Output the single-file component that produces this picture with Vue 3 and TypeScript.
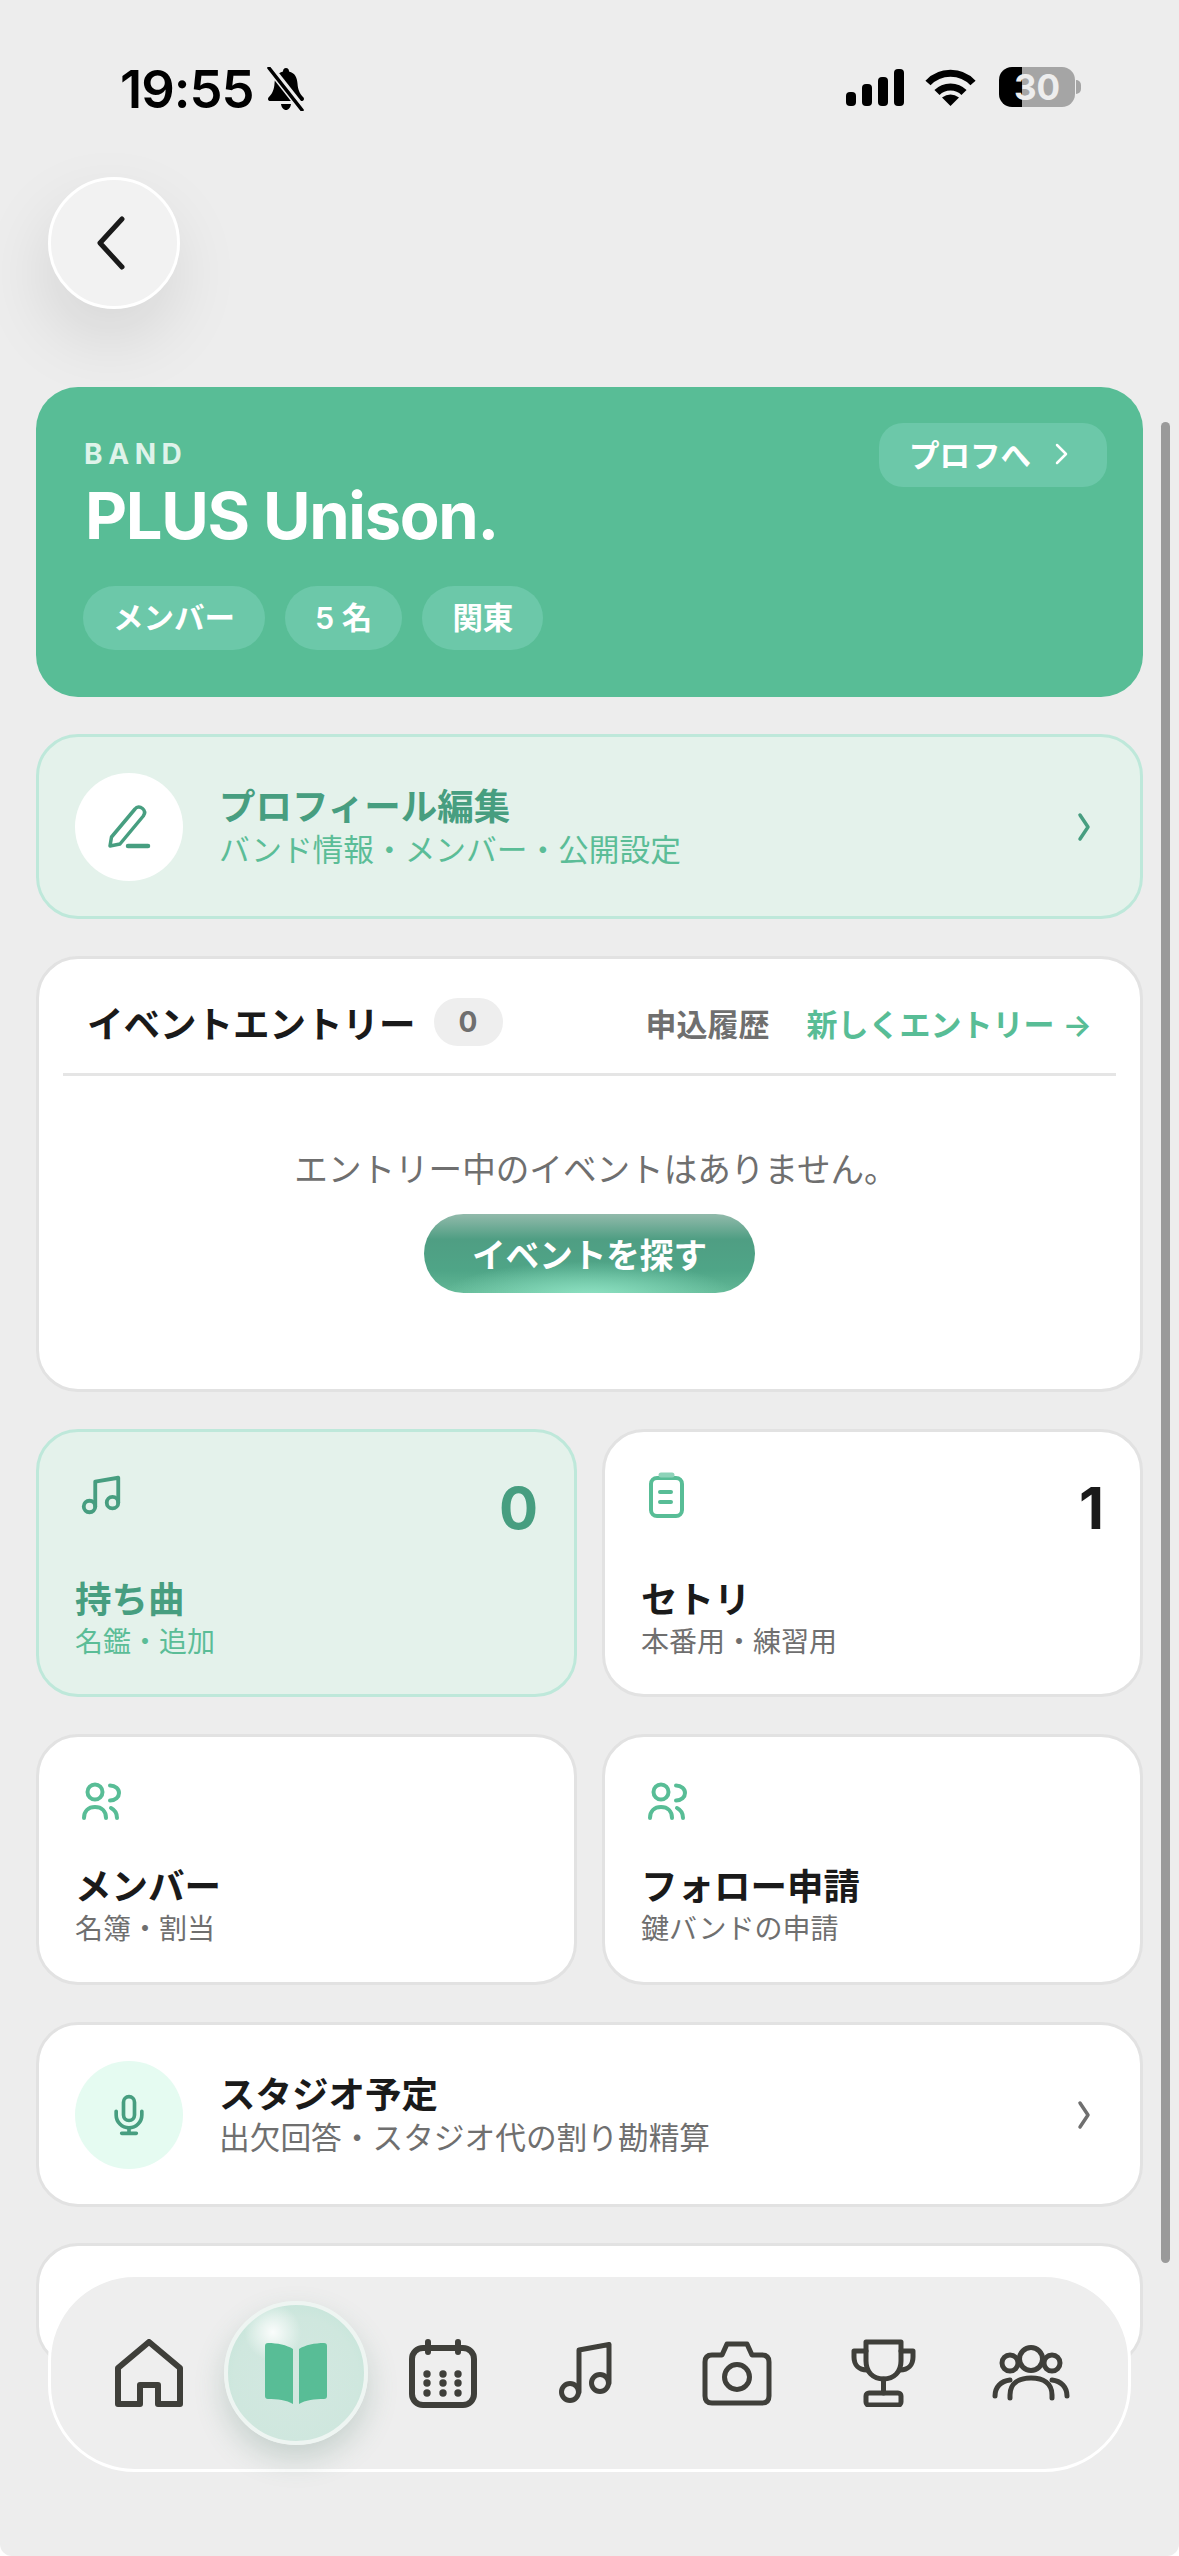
<script setup lang="ts">
interface Tile {
  title: string
  sub: string
  icon: 'music' | 'list' | 'users'
  count?: number
  active?: boolean
}

const chips = ['メンバー', '5 名', '関東']

const tiles: Tile[] = [
  { title: '持ち曲', sub: '名鑑・追加', icon: 'music', count: 0, active: true },
  { title: 'セトリ', sub: '本番用・練習用', icon: 'list', count: 1 },
  { title: 'メンバー', sub: '名簿・割当', icon: 'users' },
  { title: 'フォロー申請', sub: '鍵バンドの申請', icon: 'users' }
]

const calendarDots = [18, 34, 49].flatMap((cx) => [35, 44, 54].map((cy) => ({ cx, cy })))
</script>

<template>
  <div class="page">
    <header class="status">
      <div class="status-left">
        <span class="time">19:55</span>
        <svg class="bell" width="40" height="44" viewBox="0 0 40 44">
          <path d="M20 1c2 0 3 1.500 3 3.500 6 1.500 8 6 8.500 12 .4 6 2 10 6 14 1 1.500 .5 3.500-2 3.500H4.500c-2.500 0-3-2-2-3.500 4-4 5.600-8 6-14 .5-6 2.500-10.500 8.500-12C17 2.500 18 1 20 1z" fill="#000" />
          <path d="M15 37h10c-.5 3.500-2.500 6-5 6s-4.500-2.500-5-6z" fill="#000" />
          <path d="M4 1l33 42" stroke="#ededed" stroke-width="8" />
          <path d="M3 1l33 42" stroke="#000" stroke-width="3.500" stroke-linecap="round" />
        </svg>
      </div>
      <div class="status-right">
        <svg width="59" height="37" viewBox="0 0 59 37" fill="#000">
          <rect x="0" y="23" width="10" height="14" rx="4" />
          <rect x="16" y="15" width="10" height="22" rx="4" />
          <rect x="32" y="8" width="10" height="29" rx="4" />
          <rect x="48" y="0" width="10" height="37" rx="4" />
        </svg>
        <svg class="wifi" width="51" height="37" viewBox="0 0 51 37" fill="none" stroke="#000" stroke-width="7">
          <path d="M3 14C15 1 36 1 48 14" />
          <path d="M12 23.500C19 16 32 16 39 23.500" />
          <path d="M25.500 37L17 28.500Q25.500 22.500 34 28.500Z" fill="#000" stroke="none" />
        </svg>
        <div class="battery">
          <div class="battery-body">30</div>
          <span class="battery-nub"></span>
        </div>
      </div>
    </header>

    <button class="back" type="button" aria-label="戻る">
      <svg width="30" height="54" viewBox="0 0 30 54" fill="none" stroke="#1a1a1a" stroke-width="5" stroke-linecap="round" stroke-linejoin="round">
        <path d="M26 3L4 27l22 24" />
      </svg>
    </button>

    <main class="content">
      <section class="hero">
        <div class="hero-main">
          <div class="hero-label">BAND</div>
          <h1 class="hero-name">PLUS Unison.</h1>
          <div class="chips">
            <span v-for="chip in chips" :key="chip" class="chip">{{ chip }}</span>
          </div>
        </div>
        <a class="profile-link">
          プロフへ
          <svg width="13" height="22" viewBox="0 0 13 22" fill="none" stroke="#fff" stroke-width="2.500" stroke-linecap="round" stroke-linejoin="round">
            <path d="M2 2l9 9-9 9" />
          </svg>
        </a>
      </section>

      <section class="row-card row-card--accent">
        <span class="row-icon row-icon--white">
          <svg width="46" height="46" viewBox="0 0 46 46" fill="none" stroke="#479e80" stroke-width="3.500" stroke-linecap="round" stroke-linejoin="round">
            <path d="M4 42l1.500-9L29 5c2-2.500 5-2.500 7.500-.5s2.500 5 .8 7.500L14 40z" />
            <path d="M22 42h20" stroke-width="4.500" />
          </svg>
        </span>
        <div class="row-text">
          <div class="row-title">プロフィール編集</div>
          <div class="row-sub">バンド情報・メンバー・公開設定</div>
        </div>
        <svg class="row-chevron" width="14" height="30" viewBox="0 0 14 30" fill="none" stroke="#479e80" stroke-width="3.500" stroke-linecap="round" stroke-linejoin="round">
          <path d="M3 3l8 12-8 12" />
        </svg>
      </section>

      <section class="entry-card">
        <div class="entry-head">
          <span class="entry-title">イベントエントリー</span>
          <span class="entry-badge">0</span>
          <span class="entry-history">申込履歴</span>
          <span class="entry-new">新しくエントリー →</span>
        </div>
        <div class="entry-body">
          <p class="entry-empty">エントリー中のイベントはありません。</p>
          <button class="entry-btn" type="button">イベントを探す</button>
        </div>
      </section>

      <section class="tiles">
        <article v-for="tile in tiles" :key="tile.title" class="tile" :class="{ 'tile--active': tile.active, 'tile--plain': tile.count === undefined }">
          <div class="tile-head">
            <svg v-if="tile.icon === 'music'" width="46" height="46" viewBox="0 0 24 24" fill="none" stroke="#479e80" stroke-width="2" stroke-linecap="round" stroke-linejoin="round">
              <path d="M9 18V5l12-2v13" />
              <circle cx="6" cy="18" r="3" />
              <circle cx="18" cy="16" r="3" />
            </svg>
            <svg v-else-if="tile.icon === 'list'" class="tile-icon-list" width="46" height="50" viewBox="0 0 46 50" fill="none" stroke="#58bd96" stroke-width="4" stroke-linecap="round" stroke-linejoin="round">
              <rect x="7" y="9" width="31" height="38" rx="6" />
              <path d="M17 6h11" stroke="#8ed3b9" stroke-width="5" />
              <path d="M16 23h11M16 33h11" />
            </svg>
            <svg v-else width="46" height="46" viewBox="0 0 46 46" fill="none" stroke="#58bd96" stroke-width="4" stroke-linecap="round" stroke-linejoin="round">
              <circle cx="17" cy="12" r="7.500" />
              <path d="M6 38c0-7 4.500-11 11-11s11 4 11 11" />
              <path d="M32 5.500c5.500 0 9 3.500 9 7.500s-3.500 7.500-9 7.500" />
              <path d="M33 28c4 2 6 5.500 6 10" />
            </svg>
            <span v-if="tile.count !== undefined" class="tile-count">{{ tile.count }}</span>
          </div>
          <div class="tile-title">{{ tile.title }}</div>
          <div class="tile-sub">{{ tile.sub }}</div>
        </article>
      </section>

      <section class="row-card">
        <span class="row-icon row-icon--mint">
          <svg width="44" height="44" viewBox="0 0 24 24" fill="none" stroke="#479e80" stroke-width="2" stroke-linecap="round" stroke-linejoin="round">
            <rect x="9" y="2" width="6" height="13" rx="3" />
            <path d="M19 10v2a7 7 0 0 1-14 0v-2" />
            <path d="M12 19v3M8 22h8" />
          </svg>
        </span>
        <div class="row-text">
          <div class="row-title row-title--dark">スタジオ予定</div>
          <div class="row-sub row-sub--grey">出欠回答・スタジオ代の割り勘精算</div>
        </div>
        <svg class="row-chevron" width="14" height="30" viewBox="0 0 14 30" fill="none" stroke="#6f6f6f" stroke-width="3.500" stroke-linecap="round" stroke-linejoin="round">
          <path d="M3 3l8 12-8 12" />
        </svg>
      </section>

      <section class="peek-card"></section>
    </main>

    <div class="scrollbar"></div>

    <nav class="tabbar">
      <span class="tab">
        <svg width="68" height="68" viewBox="0 0 68 68" fill="none" stroke="#3f3f3a" stroke-width="6" stroke-linejoin="round">
          <path d="M3 29L34 3l31 26v36H43V46H25v19H3z" />
        </svg>
      </span>
      <span class="tab">
        <span class="tab-bubble">
          <svg width="62" height="61" viewBox="0 0 62 61" fill="#58bd96">
            <path d="M3 0C12 0 22 2 28 6v55c-6-4-16-5-25-5-2 0-3-1-3-3V3c0-2 1-3 3-3z" />
            <path d="M34 6c6-4 16-6 25-6 2 0 3 1 3 3v50c0 2-1 3-3 3-9 0-19 1-25 5z" />
          </svg>
        </span>
      </span>
      <span class="tab">
        <svg width="68" height="69" viewBox="0 0 68 69" fill="none" stroke="#3f3f3a" stroke-width="6" stroke-linecap="round">
          <rect x="3" y="9" width="62" height="57" rx="11" />
          <path d="M19 3v10M49 3v10" />
          <circle v-for="dot in calendarDots" :key="`${dot.cx}-${dot.cy}`" :cx="dot.cx" :cy="dot.cy" r="3.700" fill="#3f3f3a" stroke="none" />
        </svg>
      </span>
      <span class="tab">
        <svg class="tab-music" width="54" height="62" viewBox="0 0 54 62" fill="none" stroke="#3f3f3a" stroke-width="5" stroke-linecap="round" stroke-linejoin="round">
          <path d="M20 50V8l30-5.500V41" />
          <circle cx="11" cy="50" r="8.500" />
          <circle cx="41" cy="41" r="8.500" />
        </svg>
      </span>
      <span class="tab">
        <svg width="70" height="65" viewBox="0 0 70 65" fill="none" stroke="#3f3f3a" stroke-width="5" stroke-linejoin="round">
          <path d="M10 14h10l5-11h20l5 11h10q7 0 7 7v34q0 7-7 7H10q-7 0-7-7V21q0-7 7-7z" />
          <circle cx="35" cy="36" r="12.500" />
        </svg>
      </span>
      <span class="tab">
        <svg width="65" height="68" viewBox="0 0 65 68" fill="none" stroke="#3f3f3a" stroke-width="5" stroke-linecap="round" stroke-linejoin="round">
          <path d="M15 3h35v19c0 11-7 18-17.500 18S15 33 15 22z" />
          <path d="M15 12H3v6c0 8 5 13 13 13" />
          <path d="M50 12h12v6c0 8-5 13-13 13" />
          <path d="M32.500 40v14" />
          <rect x="15" y="54" width="35" height="12" rx="3" />
        </svg>
      </span>
      <span class="tab">
        <svg width="78" height="56" viewBox="0 0 78 56" fill="none" stroke="#3f3f3a" stroke-width="5" stroke-linecap="round" stroke-linejoin="round">
          <circle cx="39" cy="14" r="11.500" />
          <circle cx="18" cy="18" r="8" />
          <circle cx="60" cy="18" r="8" />
          <path d="M18 53v-3c0-12 9-17 21-17s21 5 21 17v3" />
          <path d="M3 51c0-9 6-15 15-16" />
          <path d="M75 51c0-9-6-15-15-16" />
        </svg>
      </span>
    </nav>
  </div>
</template>

<style>
html,
body {
  background: #fff;
}
</style>

<style scoped>
.page {
  position: relative;
  width: 1179px;
  height: 2556px;
  overflow: hidden;
  background: #ededed;
  border-radius: 0 0 12px 12px;
  font-family: Inter, "Noto Sans CJK JP", sans-serif;
  color: #1a1a1a;
}

/* status bar */
.status {
  display: flex;
  justify-content: space-between;
  align-items: flex-start;
  height: 177px;
  box-sizing: border-box;
  padding: 67px 98px 0 120px;
}

.status-left {
  display: flex;
  align-items: center;
  gap: 12px;
}

.time {
  font-size: 52.5px;
  line-height: 40px;
  font-weight: 600;
  letter-spacing: -1px;
  color: #000;
}

.status-right {
  display: flex;
  align-items: flex-start;
  gap: 21px;
  padding-top: 2px;
}

.wifi {
  margin: 0 2px 0 -1px;
}

.battery {
  display: flex;
  align-items: center;
  gap: 1px;
  margin-top: -2px;
}

.battery-body {
  width: 76px;
  height: 40px;
  border-radius: 13px;
  background: linear-gradient(90deg, #000 23px, #a5a5a5 23px);
  color: #ededed;
  font-size: 35px;
  font-weight: 700;
  line-height: 40px;
  text-align: center;
}

.battery-nub {
  width: 5px;
  height: 14px;
  border-radius: 0 7px 7px 0;
  background: #a5a5a5;
}

.back {
  display: flex;
  align-items: center;
  justify-content: center;
  width: 132px;
  height: 132px;
  margin: 0 0 78px 48px;
  padding: 0 6px 0 0;
  box-sizing: border-box;
  border: 3px solid #fff;
  border-radius: 50%;
  background: #f2f2f2;
  box-shadow: -4px 30px 70px rgba(0, 0, 0, 0.1);
}

.content {
  display: flex;
  flex-direction: column;
  gap: 37px;
  padding: 0 36px;
}

/* hero */
.hero {
  display: flex;
  justify-content: space-between;
  align-items: flex-start;
  height: 310px;
  box-sizing: border-box;
  padding: 36px 36px 0 48px;
  border-radius: 42px;
  background: #58bd96;
  color: #fff;
}

.hero-label {
  margin-top: 15px;
  font-size: 28px;
  line-height: 32px;
  font-weight: 700;
  letter-spacing: 0.2em;
  color: #dff3ea;
}

.hero-name {
  margin: 7px 0 0 1px;
  font-size: 65px;
  line-height: 78px;
  font-weight: 700;
  letter-spacing: -0.02em;
}

.chips {
  display: flex;
  gap: 20px;
  margin: 31px 0 0 -1px;
}

.chip {
  height: 64px;
  padding: 0 30px;
  border-radius: 32px;
  background: #6cc8a9;
  font-size: 30.5px;
  line-height: 64px;
  font-weight: 600;
}

.profile-link {
  display: flex;
  align-items: center;
  gap: 24px;
  height: 64px;
  padding: 0 39px 2px 30px;
  box-sizing: border-box;
  border-radius: 24px;
  background: #6cc8a9;
  font-size: 30.5px;
  font-weight: 600;
}

/* rows */
.row-card {
  display: flex;
  align-items: center;
  height: 185px;
  box-sizing: border-box;
  padding: 0 49px 0 36px;
  border: 3px solid #e2e2e2;
  border-radius: 42px;
  background: #fff;
}

.row-card--accent {
  border-color: #bee8da;
  background: #e4f2eb;
}

.row-icon {
  display: flex;
  align-items: center;
  justify-content: center;
  flex: none;
  width: 108px;
  height: 108px;
  border-radius: 50%;
}

.row-icon--white {
  background: #fff;
}

.row-icon--mint {
  background: #e5fbf1;
}

.row-text {
  flex: 1;
  margin-left: 36px;
  padding-top: 3px;
}

.row-title {
  font-size: 36.5px;
  line-height: 42px;
  font-weight: 700;
  color: #479e80;
}

.row-title--dark {
  color: #1a1a1a;
}

.row-sub {
  margin-top: 2px;
  font-size: 30.7px;
  line-height: 40px;
  color: #5bbd97;
}

.row-sub--grey {
  color: #6f6f6f;
}

.row-chevron {
  flex: none;
}

/* entry */
.entry-card {
  height: 436px;
  box-sizing: border-box;
  padding: 0 24px;
  border: 3px solid #e2e2e2;
  border-radius: 42px;
  background: #fff;
}

.entry-head {
  display: flex;
  align-items: center;
  height: 117px;
  box-sizing: border-box;
  padding: 12px 24px 0 24px;
  border-bottom: 3px solid #e5e5e5;
}

.entry-title {
  font-size: 36.5px;
  font-weight: 700;
}

.entry-badge {
  width: 69px;
  height: 48px;
  margin-left: 18px;
  border-radius: 24px;
  background: #eee;
  color: #6f6f6f;
  font-size: 28px;
  line-height: 48px;
  font-weight: 700;
  text-align: center;
}

.entry-history {
  margin-left: auto;
  color: #6f6f6f;
  font-size: 31px;
  font-weight: 600;
}

.entry-new {
  margin-left: 37px;
  color: #58bd96;
  font-size: 31px;
  font-weight: 600;
}

.entry-body {
  display: flex;
  flex-direction: column;
  align-items: center;
}

.entry-empty {
  margin: 72px 0 0;
  padding-left: 13px;
  color: #6f6f6f;
  font-size: 33.6px;
  line-height: 44px;
}

.entry-btn {
  width: 331px;
  height: 79px;
  margin-top: 22px;
  padding: 0;
  border: 0;
  border-radius: 40px;
  background:
    radial-gradient(ellipse 45% 45% at 50% 105%, #8fe3c4 0%, rgba(143, 227, 196, 0) 100%),
    linear-gradient(180deg, #92baab 0%, #4f9e83 32%, #4fa587 72%, #62b896 100%);
  color: #fff;
  font-family: inherit;
  font-size: 33.6px;
  font-weight: 600;
}

/* tiles */
.tiles {
  display: grid;
  grid-template-columns: 541px 541px;
  gap: 37px 25px;
}

.tile {
  box-sizing: border-box;
  padding: 37px 36px 32px;
  border: 3px solid #e2e2e2;
  border-radius: 42px;
  background: #fff;
}

.tile--plain {
  padding-top: 42px;
  padding-bottom: 33px;
}

.tile--active {
  border-color: #bee8da;
  background: #e4f2eb;
}

.tile-head {
  display: flex;
  justify-content: space-between;
  align-items: flex-start;
  margin-bottom: 40px;
}

.tile-head svg {
  margin: 3px 0 -3px 3px;
}

.tile--plain .tile-head svg {
  margin: 1px 0 -1px 3px;
}

.tile-head .tile-icon-list {
  margin: 0 0 -4px 3px;
}

.tile-count {
  margin-top: 10px;
  font-size: 58px;
  line-height: 59px;
  font-weight: 700;
}

.tile--active .tile-count {
  color: #479e80;
}

.tile-title {
  font-size: 36.5px;
  line-height: 44px;
  font-weight: 700;
}

.tile--active .tile-title {
  color: #479e80;
}

.tile-sub {
  color: #6f6f6f;
  font-size: 28px;
  line-height: 40px;
}

.tile--active .tile-sub {
  color: #5bbd97;
}

.peek-card {
  height: 125px;
  margin-top: -1px;
  border: 3px solid #e2e2e2;
  border-radius: 42px;
  background: #fff;
  box-sizing: border-box;
}

/* overlays */
.scrollbar {
  position: absolute;
  top: 422px;
  left: 1161px;
  width: 9px;
  height: 1841px;
  border-radius: 5px;
  background: #9a9a9a;
}

.tabbar {
  position: absolute;
  top: 2274px;
  left: 48px;
  display: grid;
  grid-template-columns: repeat(7, 1fr);
  align-items: center;
  width: 1083px;
  height: 198px;
  box-sizing: border-box;
  padding: 0 24px 0 25px;
  border: 3px solid #fff;
  border-radius: 87px;
  background: #eee;
}

.tab {
  display: flex;
  align-items: center;
  justify-content: center;
}

.tab-music {
  margin-left: -8px;
}

.tab-bubble {
  display: flex;
  align-items: center;
  justify-content: center;
  flex: none;
  width: 144px;
  height: 144px;
  box-sizing: border-box;
  border: 4px solid #eef5f2;
  border-radius: 50%;
  background:
    radial-gradient(circle at 33% 20%, rgba(255, 255, 255, 0.9) 0, rgba(255, 255, 255, 0) 20%),
    radial-gradient(circle at 50% 55%, #d3e8e1 0%, #cfe7de 62%, #bde3d6 100%);
  box-shadow: 0 14px 30px rgba(60, 110, 90, 0.22);
}
</style>
